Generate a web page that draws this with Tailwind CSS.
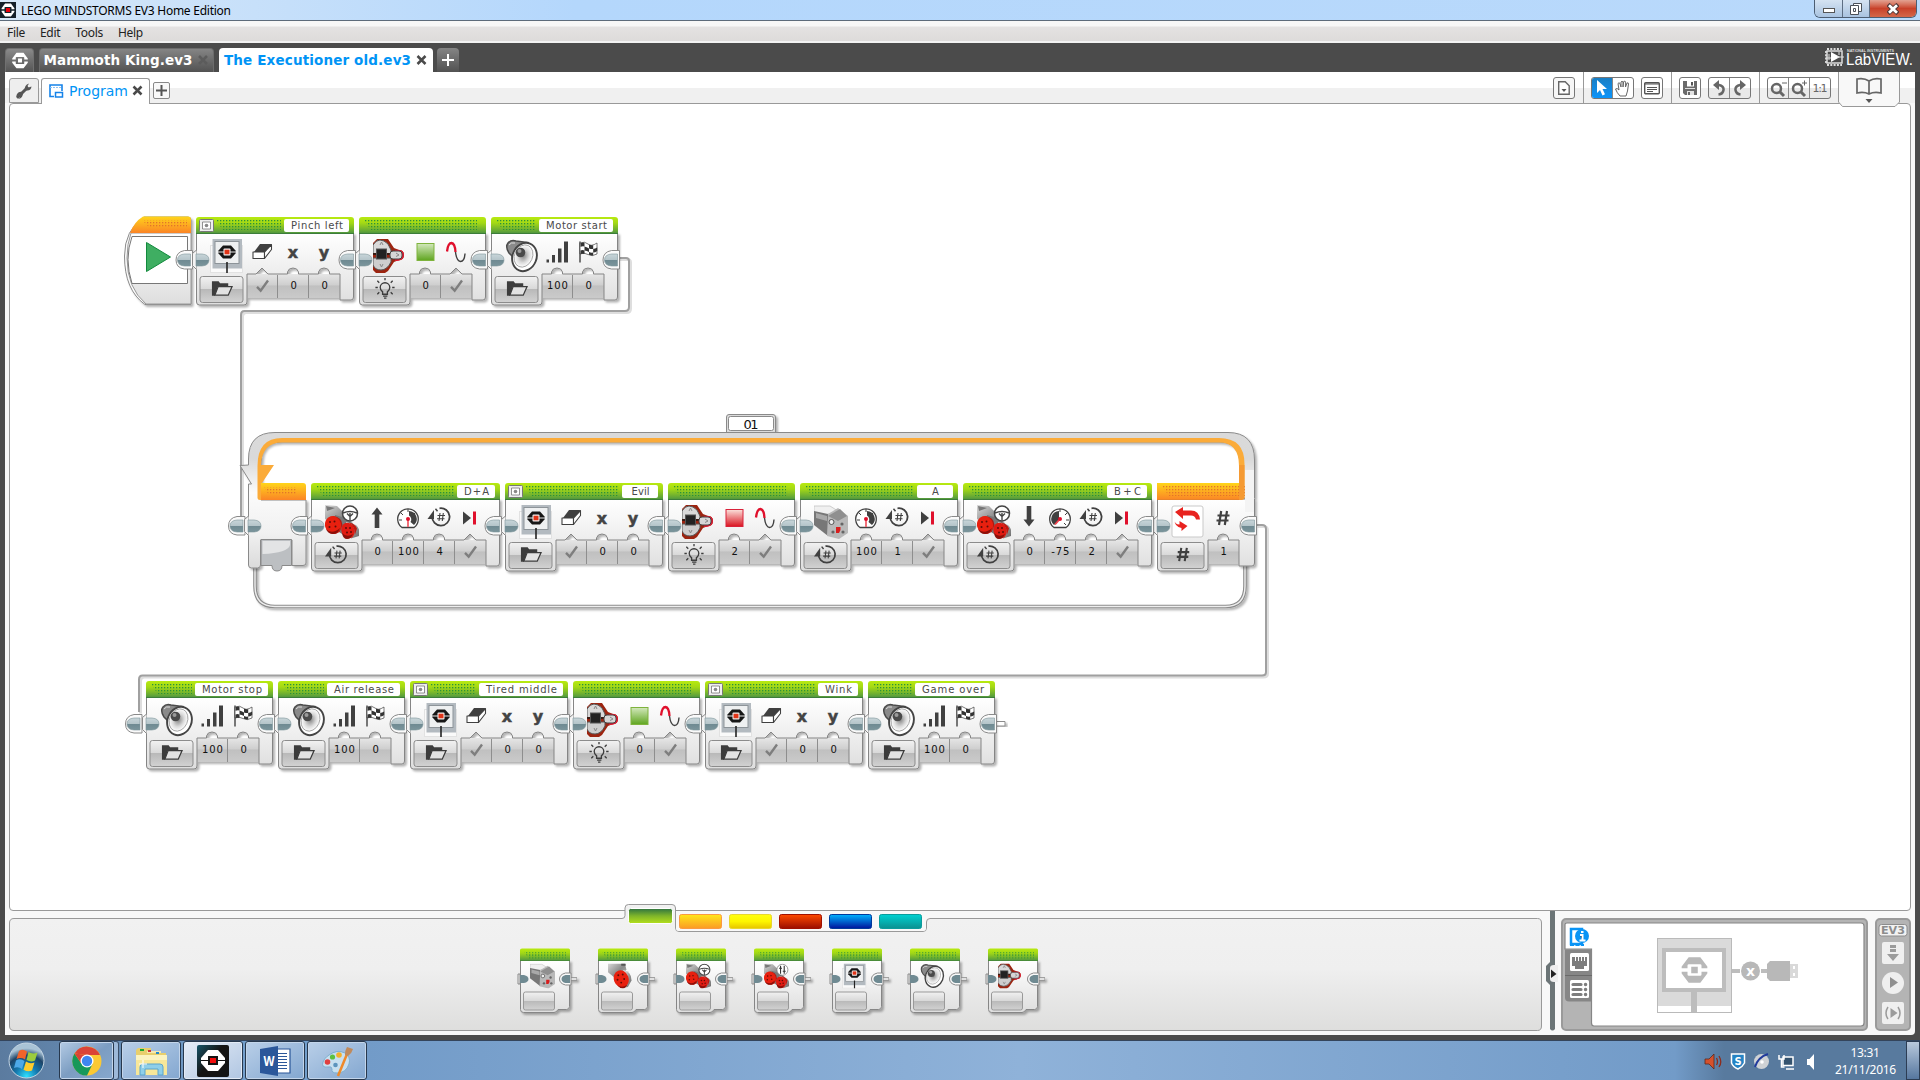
<!DOCTYPE html>
<html lang="en">
<head>
<meta charset="utf-8">
<title>LEGO MINDSTORMS EV3 Home Edition</title>
<script src="https://cdn.jsdelivr.net/npm/@tailwindcss/browser@4"></script>
</head>
<body class="w-[1920px] h-[1080px] overflow-hidden bg-[#4b4b4b] flex flex-col font-['Noto_Sans','Open_Sans',sans-serif]">

<!-- shared definitions -->
<svg class="absolute w-0 h-0" aria-hidden="true">
  <defs>
    <linearGradient id="green" x1="0" y1="0" x2="0" y2="1"><stop offset="0" stop-color="#b8ea10"/><stop offset=".35" stop-color="#a4d915"/><stop offset=".9" stop-color="#5a9f3c"/><stop offset="1" stop-color="#3f8038"/></linearGradient>
    <linearGradient id="orange" x1="0" y1="0" x2="0" y2="1"><stop offset="0" stop-color="#ffd51a"/><stop offset="1" stop-color="#fb8426"/></linearGradient>
    <linearGradient id="body" x1="0" y1="0" x2="0" y2="1"><stop offset="0" stop-color="#fff"/><stop offset=".3" stop-color="#f6f6f6"/><stop offset="1" stop-color="#dedede"/></linearGradient>
    <linearGradient id="param" x1="0" y1="0" x2="0" y2="1"><stop offset="0" stop-color="#e6e6e6"/><stop offset=".45" stop-color="#cfcfcf"/><stop offset=".5" stop-color="#c0c0c0"/><stop offset="1" stop-color="#cacaca"/></linearGradient>
    <linearGradient id="btn" x1="0" y1="0" x2="0" y2="1"><stop offset="0" stop-color="#f2f2f2"/><stop offset=".49" stop-color="#d8d8d8"/><stop offset=".5" stop-color="#b9b9b9"/><stop offset="1" stop-color="#d2d2d2"/></linearGradient>
    <linearGradient id="plug" x1="0" y1="0" x2="0" y2="1"><stop offset="0" stop-color="#c8d5d9"/><stop offset=".5" stop-color="#b4c4c9"/><stop offset=".52" stop-color="#6f8a92"/><stop offset="1" stop-color="#7b959c"/></linearGradient>
    <linearGradient id="sqg" x1="0" y1="0" x2="0" y2="1"><stop offset="0" stop-color="#d3e8bd"/><stop offset="1" stop-color="#5fa51f"/></linearGradient>
    <linearGradient id="sqr" x1="0" y1="0" x2="0" y2="1"><stop offset="0" stop-color="#fbe2dc"/><stop offset="1" stop-color="#da1420"/></linearGradient>
    <linearGradient id="metal" x1="0" y1="0" x2="1" y2="1"><stop offset="0" stop-color="#d8d8d8"/><stop offset=".5" stop-color="#8b8b8b"/><stop offset="1" stop-color="#c4c4c4"/></linearGradient>
    <linearGradient id="rim" x1="0" y1="0" x2="1" y2="1"><stop offset="0" stop-color="#efefef"/><stop offset=".5" stop-color="#9a9a9a"/><stop offset="1" stop-color="#666"/></linearGradient>
    <linearGradient id="frame" gradientUnits="userSpaceOnUse" x1="0" y1="432" x2="0" y2="566"><stop offset="0" stop-color="#dadada"/><stop offset=".2" stop-color="#d9d9d9"/><stop offset=".45" stop-color="#fbfbfb"/><stop offset=".75" stop-color="#f1f1f1"/><stop offset="1" stop-color="#dcdcdc"/></linearGradient>
    <radialGradient id="cone"><stop offset="0" stop-color="#888"/><stop offset=".6" stop-color="#dcdcdc"/><stop offset="1" stop-color="#fff"/></radialGradient>
    <pattern id="dots" width="3" height="3" patternUnits="userSpaceOnUse"><rect width="1.3" height="1.3" fill="#2b9139"/></pattern>
    <pattern id="dotso" width="3" height="3" patternUnits="userSpaceOnUse"><rect width="1.3" height="1.3" fill="#e2742a"/></pattern>
    <filter id="sh" x="-10%" y="-10%" width="125%" height="130%"><feDropShadow dx="2" dy="2" stdDeviation="1" flood-color="#000" flood-opacity=".3"/></filter>

    <symbol id="ev3" viewBox="0 0 24 24"><path fill="currentColor" d="M7 1h10l6 8v1.6h-5V8.2q0-1.2-1.2-1.2H7.200q-1.200 0-1.200 1.200v2.400H1V9zM7 23h10l6-8v-1.600h-5v2.400q0 1.200-1.200 1.200H7.200q-1.200 0-1.200-1.200v-2.400H1V15zM9.200 9.200h5.600v5.600H9.200z"/></symbol>

    <!-- main block artwork, 34 x 34 -->
    <symbol id="m-display" viewBox="0 0 34 34"><rect x=".5" y="6.500" width="32" height="27" fill="#fafafa" stroke="#e2e2e2"/><rect x="2.500" y="0" width="29.500" height="29.500" fill="#b3bac0"/><rect x="5" y="2.500" width="24" height="22" fill="#eef0f1" stroke="#8d9499"/><path d="M13 6.500h8l4.500 5v3l-4.500 5h-8l-4.500-5v-3z" fill="#161616"/><path d="M8.500 13h17" stroke="#fff" stroke-width=".9"/><rect x="13.500" y="9.500" width="7" height="7" rx="1" fill="#f4f4f4"/><rect x="14.500" y="10.700" width="5" height="4.600" fill="#e03418"/><path d="M17 23V34" stroke="#222" stroke-width="1.600"/></symbol>
    <symbol id="m-brick" viewBox="0 0 34 34"><path d="M0 4 4 0h11l6 9 5 2q5 0 5 5t-5 5l-5 2-6 9-3 2H3l-3-3z" fill="#9c2410"/><path d="M22 11q9-1 9 5t-9 6z" fill="#e01830"/><path d="M0 6q3-5 7-5t8 4l3 6v4H0z" fill="#d9d9d9" stroke="#555"/><path d="M0 19h18v4q-4 8-10 8T0 26z" fill="#cecece" stroke="#555"/><path d="M0 15h28" stroke="#3b1b14" stroke-width="2"/><rect x="3.500" y="10" width="10" height="10" fill="#222" stroke="#555"/><rect x="17" y="12" width="12" height="8" rx="3" fill="#d6d6d6" stroke="#444"/><path d="m7 6 1.500-3L10 6M7 25l1.500 3 1.500-3M23 14l3 2-3 1.500" stroke="#888" fill="none"/></symbol>
    <symbol id="m-speaker" viewBox="0 0 34 34"><path d="M4 14Q0 8 3 4q3-3.500 8-2l12 1.500L9 25 7 17z" fill="#8a8a8a" stroke="#4b4b4b" stroke-width="1.500"/><path d="M4 6q2-3 6-2" stroke="#ddd" fill="none"/><ellipse cx="19.500" cy="18" rx="12" ry="14.500" transform="rotate(22 19.500 18)" fill="#fff" stroke="#444" stroke-width="1.900"/><ellipse cx="18.500" cy="17" rx="9" ry="11.500" transform="rotate(24 18.500 17)" fill="url(#cone)" stroke="#999" stroke-width=".8"/><circle cx="15.500" cy="13.500" r="4.800" fill="#4a4a4a"/><circle cx="14.500" cy="12" r="2" fill="#9a9a9a"/></symbol>
    <symbol id="m-wheels" viewBox="0 0 34 34"><path d="M0 0 12 1l8 8 12 14-14 2L0 14z" fill="url(#metal)"/><path d="M1 1l9 2-8 3z" fill="#444" opacity=".6"/><path d="m10 10 10 3 8 6-8 12-9-6z" fill="#777"/><path d="M21 17 31 20q5 5 3 11l-8 2.500z" fill="url(#rim)"/><ellipse cx="23" cy="25.500" rx="6.500" ry="8" transform="rotate(-20 23 25.500)" fill="#e01b12"/><path d="M24 17.500q6 1 8 6l-2 6q0-8-6-12" fill="#c01810"/><path d="M8 11q9 1 9.500 9l-3 7-4 2z" fill="#b01a12"/><ellipse cx="8" cy="20" rx="8" ry="9" transform="rotate(-15 8 20)" fill="#e8200f"/><path d="M1 24q6 6 14-1-2 6-7 6t-7-5zM17 28q5 5 11 1-2 5-6 5t-5-6z" fill="#8c100a"/><g fill="#5c0d08"><circle cx="5" cy="17" r="1"/><circle cx="9.500" cy="16.500" r="1"/><circle cx="4.500" cy="22" r="1"/><circle cx="10.500" cy="21.500" r="1"/><circle cx="21" cy="23" r="1"/><circle cx="25" cy="23" r="1"/><circle cx="22" cy="27.500" r="1"/><circle cx="26" cy="27" r="1"/></g></symbol>
    <symbol id="m-steer" viewBox="0 0 34 34"><use href="#m-wheels" width="34" height="34"/><circle cx="25" cy="8.500" r="7.500" fill="#fff" stroke="#444" stroke-width="1.500"/><path d="M18 8q7-3 14 0M25 8v7.500M22 8.500l3 3 3-3" stroke="#444" stroke-width="1.400" fill="none"/></symbol>
    <symbol id="m-tank" viewBox="0 0 34 34"><use href="#m-wheels" width="34" height="34"/><circle cx="25" cy="8.500" r="7.500" fill="#fff" stroke="#777"/><path d="M22.500 3v11M27.500 3v11M20.500 6.500h4M25.500 10.500h4" stroke="#333" stroke-width="1.500"/></symbol>
    <symbol id="m-large" viewBox="0 0 34 34"><path d="M0 0h23l2 8-10 16L0 12z" fill="url(#metal)"/><path d="M18 0h6v3h-6z" fill="#555"/><path d="M21 9q11 2 11 14l-5 9-6 1z" fill="url(#rim)"/><ellipse cx="18" cy="21" rx="10" ry="12" transform="rotate(-20 18 21)" fill="#e8200f"/><path d="M12 29q7 5 14 0-2 5-6 5t-8-5" fill="#8c100a"/><g fill="#5c0d08"><circle cx="14" cy="16" r="1.300"/><circle cx="20" cy="15" r="1.300"/><circle cx="13" cy="22" r="1.300"/><circle cx="22" cy="21" r="1.300"/><circle cx="18" cy="26" r="1.300"/></g></symbol>
    <symbol id="m-medium" viewBox="0 0 34 34"><path d="M0 1h16l8 5-16 5-8-4z" fill="#f0f0f0" stroke="#bbb" stroke-width=".7"/><path d="M0 6 14 9v22L0 20z" fill="#777"/><path d="M14 9 24 3l10 8v17l-9 6-12-3z" fill="#b9b9b9"/><path d="M14 11l12-7 7 7-9 5z" fill="#8f8f8f"/><path d="M2 8l11 3v5L2 13z" fill="#a9a9a9"/><circle cx="17.500" cy="17" r="2.500" fill="#eee" stroke="#555"/><g fill="#666"><circle cx="28" cy="19" r="1.600"/><circle cx="19" cy="27" r="1.600"/><circle cx="29" cy="27" r="1.600"/></g><path d="M22 22h4.500v3l-1.500 3h-3z" fill="#d81e1e"/></symbol>
    <symbol id="m-loop" viewBox="0 0 34 34"><rect x="1" y="1" width="31" height="31" rx="2" fill="#fff" stroke="#c9c9c9"/><path d="M4 7 12 2v3.500h8q8 0 9 9h-4q-1-4-5-4h-8V14z" fill="#e8231f"/><path d="M3.500 14.500q0 5 5 5V16l8 5-6 5v-3Q3.500 22 3.500 14.500" fill="#e8231f"/></symbol>

    <!-- parameter glyphs, centred on 12,12 of a 24 x 24 box -->
    <symbol id="p-eraser" viewBox="0 0 24 24"><path d="M10 4h11.500l-6 8H4z" fill="#404040"/><path d="M3 12h11.500v6.500H3z" fill="#fff" stroke="#404040" stroke-width="1.100" stroke-linejoin="round"/><path d="M14.500 18.500l7-9V4.500l-7 7.500z" fill="#fff" stroke="#404040" stroke-width="1.100" stroke-linejoin="round"/></symbol>
    <symbol id="p-sqg" viewBox="0 0 24 24"><rect x="3.500" y="3.500" width="17" height="17" fill="url(#sqg)" stroke="#7eb33c"/></symbol>
    <symbol id="p-sqr" viewBox="0 0 24 24"><rect x="3.500" y="3.500" width="17" height="17" fill="url(#sqr)" stroke="#d9223a"/></symbol>
    <symbol id="p-wave" viewBox="0 0 24 24"><path d="M11.500 12q1 9 5 9.500 4 0 4.500-8" fill="none" stroke="#404040" stroke-width="1.400"/><path d="M3 11.500q1-8.500 4.500-8.500 3.500.5 4 9" fill="none" stroke="#e0102c" stroke-width="2.300"/></symbol>
    <symbol id="p-bars" viewBox="0 0 24 24"><path d="M1.500 19.500h2.500v3H1.500zM7 15h3v7.500H7zM13 8.500h3.500v14H13zM19 1.500h4v21h-4z" fill="#404040"/></symbol>
    <symbol id="p-flag" viewBox="0 0 24 24"><path d="M4 1.500v21" stroke="#404040" stroke-width="1.400"/><path d="M4 3q5-2 8 1t9-1v11q-5 3-9 0.500T4 14z" fill="#fff" stroke="#404040" stroke-width=".7"/><path d="M4.500 3q2-1 4-.3V6.500q-2-.5-4 .3zM13 4.500q2 1 4.200.7V9q-2 .2-4.200-.5zM8.500 6.500q2 .5 4.500 2V12q-2-1.500-4.500-1.500zM17.200 9q2-.3 4-1.500V11q-2 1.500-4 1.500zM4.500 10.500q2-1 4 0V14q-2-.5-4 0zM13 12q2 1 4.200.5V15.500q-2 .3-4.200-.7z" fill="#333"/></symbol>
    <symbol id="p-up" viewBox="0 0 24 24"><path d="M12 1.500 17.500 8.500h-3.200v13.500H9.700V8.500H6.500z" fill="#404040"/></symbol>
    <symbol id="p-down" viewBox="0 0 24 24"><path d="M12 20.500 6.500 13.500h3.200V0h4.600v13.500h3.200z" fill="#404040"/></symbol>
    <symbol id="p-gauge" viewBox="0 0 24 24"><path d="M6 21.500a10.300 10.300 0 1 1 12 0z" fill="#fff" stroke="#404040" stroke-width="1.300"/><path d="M13 5a8 8 0 0 1 5 14l-3.500-3a4.500 4.500 0 0 0-1.500-6.500z" fill="#404040"/><path d="M12 3v3M5 7l2 2M3 14h3M19 7l-2 2" stroke="#404040"/><path d="M12 13v8" stroke="#f0616c" stroke-width="1.800"/><circle cx="12" cy="13" r="2" fill="#e0102c"/></symbol>
    <symbol id="p-gaugel" viewBox="0 0 24 24"><path d="M6 21.500a10.300 10.300 0 1 1 12 0z" fill="#fff" stroke="#404040" stroke-width="1.300"/><path d="M11 5a8 8 0 0 0-5 14l5-5z" fill="#404040"/><path d="M12 3v3M19 7l-2 2M21 14h-3M18 19l-2-2" stroke="#404040"/><path d="m12 13-5 5.500" stroke="#f0414c" stroke-width="1.800"/><circle cx="12" cy="13" r="2" fill="#e0102c"/></symbol>
    <symbol id="p-rot" viewBox="0 0 24 24"><path d="M12.500 3.300a8.700 8.700 0 1 1-7.300 8" fill="none" stroke="#404040" stroke-width="1.800"/><path d="M7 5v9H.5z" fill="#404040"/><path d="M8.500 3.800l2 2.500" stroke="#404040" stroke-width="1.500" fill="none"/><path d="M13 8 12 16M16.300 8l-1 8M10.500 10.500h7.500M10 13.700h7.500" stroke="#404040" stroke-width="1.100"/></symbol>
    <symbol id="p-skip" viewBox="0 0 24 24"><path d="M5 5.500 13 12l-8 6.500z" fill="#404040"/><path d="M15 5.500h3v13h-3z" fill="#e0102c"/></symbol>
    <symbol id="p-hash" viewBox="0 0 24 24"><path d="M10.200 5 8 19M16 5l-2.200 14M6.500 9.500h12M5.500 14.500h12" stroke="#404040" stroke-width="2.200"/></symbol>
    <symbol id="p-check" viewBox="0 0 24 24"><path d="M6 13l4 4 8-11" fill="none" stroke="#7e7e7e" stroke-width="2.600"/></symbol>
    <symbol id="p-folder" viewBox="0 0 24 24"><path d="M1.500 19.500V4.500h7l1.500 2h8.500v3H8L4.500 19.500z" fill="#3c3c3c"/><path d="M8 10H22.500L18.500 19H4.500z" fill="#e2e2e2" stroke="#3c3c3c" stroke-width="1.300"/></symbol>
    <symbol id="p-bulb" viewBox="0 0 24 24"><path d="M9.500 18v-2.500Q7 13.500 7 11a5 5 0 0 1 10 0q0 2.500-2.500 4.500V18zM10 20h4.500M11 22h2.500M12 3.500V1M6 6 4 4M18 6l2-2M4.500 11H2M19.500 11H22M6 16l-2 2M18 16l2 2" fill="none" stroke="#3c3c3c" stroke-width="1.400"/></symbol>
  </defs>
</svg>

<!-- title bar -->
<header class="h-[21px] shrink-0 flex items-center border-b border-[#5d6b7a] bg-linear-to-r from-[#d6e7f8] via-[#b4d7fc] via-30% to-[#b9d9fb]">
  <div class="w-4 h-4 bg-[#152029] flex items-center justify-center relative"><svg class="w-[14px] h-[14px] text-white"><use href="#ev3"/></svg><i class="absolute w-1 h-1 bg-red-600"></i></div>
  <svg class="ml-[5px] w-[214px] h-[20px]"><text x="0" y="15" font-size="12" textLength="210" class="fill-black font-['Noto_Sans']">LEGO MINDSTORMS EV3 Home Edition</text></svg>
  <div class="ml-auto mr-[3px] self-start flex h-[18px] border border-t-0 border-[#4c5d72] rounded-b-md overflow-hidden">
    <div class="w-7 bg-linear-to-b from-[#d5e3f2] to-[#a9c3e0] flex items-center justify-center border-r border-[#5d6e83]"><i class="w-3 h-[5px] mt-1 bg-white border border-[#555]"></i></div>
    <div class="w-[27px] bg-linear-to-b from-[#d5e3f2] to-[#a9c3e0] flex items-center justify-center border-r border-[#5d6e83]"><svg class="w-3 h-3" viewBox="0 0 12 12" fill="#fff" stroke="#4a5058"><path d="M3.500.5h8v8h-8z"/><path d="M.5 2.500h8v9h-8zM3.500 5.500h2v3h-2z"/></svg></div>
    <div class="w-[46px] bg-linear-to-b from-[#e2a292] via-[#c8412a] to-[#d4674a] flex items-center justify-center"><svg class="w-3 h-3" viewBox="0 0 12 12"><path d="M1 1.500 11 10.500M11 1.500 1 10.500" stroke="#53393a" stroke-width="4.500"/><path d="M2 2.300 10 9.700M10 2.300 2 9.700" stroke="#fff" stroke-width="2.800"/></svg></div>
  </div>
</header>
<!-- menu -->
<nav class="h-[22px] shrink-0 bg-linear-to-b from-[#f7f7f7] from-25% via-[#e4e2e2] via-30% to-[#dddbda] border-b-2 border-[#f2f2f2] text-[12px] leading-[24px] tracking-[-0.3px] text-[#222] flex pl-[7px] gap-[15px]">
  <span>File</span><span>Edit</span><span>Tools</span><span>Help</span>
</nav>
<!-- project tabs -->
<div class="h-[29px] shrink-0 flex items-end pl-[5px] font-['DejaVu_Sans',sans-serif]">
  <div class="w-[29px] h-[24px] rounded-t-[4px] bg-linear-to-b from-[#8a8a8a] to-[#555] border border-b-0 border-[#707070] flex items-center justify-center"><svg class="w-[18px] h-[17px] text-white"><use href="#ev3"/></svg></div>
  <div class="ml-[5px] w-[175px] h-[24px] rounded-t-[4px] bg-linear-to-b from-[#858585] to-[#525252] border border-b-0 border-[#6c6c6c]"><svg class="w-[173px] h-[24px]"><text x="3.500" y="16" font-size="13.500" font-weight="bold" textLength="149" fill="#fff" font-family="DejaVu Sans">Mammoth King.ev3</text><path d="m159 7 8 8m0-8-8 8" stroke="#5c5c5c" stroke-width="2.500"/></svg></div>
  <div class="ml-[5px] w-[214px] h-[24px] rounded-t-[4px] bg-white"><svg class="w-[214px] h-[24px]"><text x="5" y="17" font-size="13.500" font-weight="bold" textLength="187" fill="#0094f5" font-family="DejaVu Sans">The Executioner old.ev3</text><path d="m198.500 8 8 8m0-8-8 8" stroke="#4a4a4a" stroke-width="2.500"/></svg></div>
  <div class="ml-[4px] w-[22px] h-[24px] rounded-t-[4px] bg-linear-to-b from-[#858585] to-[#525252] flex items-center justify-center"><svg class="w-3 h-3"><path d="M6 0v12M0 6h12" stroke="#fff" stroke-width="2"/></svg></div>
  <div class="ml-auto self-start mt-[5px] mr-[4px] flex gap-[2px]">
    <svg class="w-[19px] h-[18px]" viewBox="0 0 19 18"><rect x="2" y="3" width="15" height="12" fill="none" stroke="#ddd" stroke-width="1.500"/><path d="M2 1h15M2 17h15M1 3v12" stroke="#ddd" stroke-width="1.800" stroke-dasharray="2 1.300"/><path d="M6 4v10l9-5z" fill="#fff"/><path d="M1 10h5M12 9h7M4 6v6M14 4v3" stroke="#ddd"/></svg>
    <svg class="w-[70px] h-[24px]"><text x="1" y="3.500" font-size="3.500" textLength="47" lengthAdjust="spacingAndGlyphs" font-weight="bold" fill="#ddd" font-family="Liberation Sans">NATIONAL INSTRUMENTS</text><text x="0" y="17" font-size="17" textLength="67" lengthAdjust="spacingAndGlyphs" fill="#fff" font-family="Liberation Sans">LabVIEW.</text></svg>
  </div>
</div>

<!-- application body -->
<main class="ml-[5px] w-[1910px] h-[963px] shrink-0 bg-[#f8f8f8] rounded-br flex flex-col">
  <!-- program tabs + toolbar -->
  <div class="h-[31px] shrink-0 bg-linear-to-b from-white from-50% to-[#f0f0f0] to-52% flex pl-[4px] relative z-10">
    <div class="mt-[6px] w-[30px] h-[25px] rounded-t-[3px] border border-[#999] bg-[#eee] flex items-center justify-center"><svg class="w-4 h-4" viewBox="0 0 16 16"><path d="M2 14 11 5" stroke="#555" stroke-width="3" stroke-linecap="round"/><path d="M9 7q-1-5 4-6.500L11.500 3l1 1.500 3-1Q15 8 10.500 7.500M6.500 9Q3 8 1 11l-1 3 2.500-1.500L4 14l-1.500 2Q7 15 7 10z" fill="#555"/></svg></div>
    <div class="ml-[2px] mt-[6px] w-[109px] h-[26px] rounded-t-[3px] border border-b-0 border-[#999] bg-white"><svg class="w-[106px] h-[25px]"><path d="M20 12V6H8v11.500h4" fill="none" stroke="#1583e9" stroke-width="1.600"/><path d="M8 8.500h12" stroke="#8cc2f4" stroke-dasharray="2 1"/><path d="M13.500 13.500h7v4.500h-7z" fill="#fff" stroke="#1583e9" stroke-width="1.500"/><text x="27" y="16.500" font-size="14" textLength="59" fill="#0094f5" font-family="DejaVu Sans">Program</text><path d="m91.500 7.500 8 8m0-8-8 8" stroke="#4a4a4a" stroke-width="2.500"/></svg></div>
    <div class="ml-[3px] mt-[10px] w-[17px] h-[17px] rounded-[2px] border border-[#888] bg-[#f8f8f8] flex items-center justify-center"><svg class="w-[11px] h-[11px]"><path d="M5.500 0v11M0 5.500h11" stroke="#555" stroke-width="2"/></svg></div>

    <div class="ml-auto flex">
      <div class="pt-[5px] pr-[8px] border-r border-[#999]"><div class="w-[22px] h-[22px] rounded-[3px] border border-[#777] flex items-center justify-center bg-[#f6f6f6]"><svg class="w-3 h-[14px]"><path d="M.7.7h6.500l4 4v8.600H.7z" fill="#fff" stroke="#666" stroke-width="1.400"/><path d="M3.500 8h5L6 11z" fill="#555"/></svg></div></div>
      <div class="pt-[5px] pl-[7px] pr-[8px] border-r border-[#999] flex gap-[7px]">
        <div class="w-[43px] h-[22px] rounded-[3px] border border-[#777] flex overflow-hidden bg-white">
          <div class="w-[21px] bg-linear-to-b from-[#1a7fc4] to-[#0a94fa] flex items-center justify-center"><svg class="w-3 h-4"><path d="M1 0v13l3-3 2.500 5.500 2.500-1.200L6.500 9H11z" fill="#fff"/></svg></div>
          <div class="w-[21px] border-l border-[#888] flex items-center justify-center"><svg class="w-4 h-[17px]" viewBox="0 0 16 17"><path d="M5 16q-3-3-4.500-7Q2 7.500 4 10L3 3.500q1-1.500 2 0L6 7V2q1-1.500 2 0v5l.7-5.500q1.300-1 2 .5L10.500 7 12 3q1.500-.7 1.500 1L12.500 11 11 16z" fill="#fff" stroke="#666"/></svg></div>
        </div>
        <div class="w-[22px] h-[22px] rounded-[3px] border border-[#777] bg-white flex items-center justify-center"><svg class="w-4 h-[14px]"><rect x=".7" y="1.700" width="14.600" height="11" rx="1" fill="#fff" stroke="#555" stroke-width="1.400"/><path d="M1 3h14M3 6.500h10M3 8.500h10M3 10.500h6" stroke="#555" stroke-width="1"/></svg></div>
      </div>
      <div class="pt-[5px] pl-[7px] pr-[8px] border-r border-[#999] flex gap-[7px]">
        <div class="w-[22px] h-[22px] rounded-[3px] border border-[#777] bg-white flex items-center justify-center"><svg class="w-[14px] h-[14px]"><path d="M0 0h14v14H2l-2-2z" fill="#6a6a6a"/><path d="M4 0h7v5.500H4z" fill="#fff"/><path d="M8 1h2v3.500H8z" fill="#555"/><path d="M2 7.500h10" stroke="#ddd"/><path d="M4 10h7v4H4z" fill="#e4e4e4"/><path d="M5 11h2v3H5z" fill="#666"/></svg></div>
        <div class="w-[43px] h-[22px] rounded-[3px] border border-[#777] bg-linear-to-b from-white from-50% to-[#e9e9e9] to-52% flex">
          <div class="w-[21px] flex items-center justify-center"><svg class="w-3 h-4"><path d="M3 5h3q5 1 4.500 5Q10 14 5.500 14.500" fill="none" stroke="#666" stroke-width="2.500"/><path d="M6 0v10L0 5z" fill="#666"/></svg></div>
          <div class="w-[21px] border-l border-[#888] flex items-center justify-center"><svg class="w-3 h-4"><path d="M9 5H6Q1 6 1.500 10 2 14 6.500 14.500" fill="none" stroke="#666" stroke-width="2.500"/><path d="M6 0v10l6-5z" fill="#666"/></svg></div>
        </div>
      </div>
      <div class="pt-[5px] pl-[7px] pr-[7px] flex">
        <div class="w-[64px] h-[22px] rounded-[3px] border border-[#777] bg-linear-to-b from-white from-50% to-[#e9e9e9] to-52% flex">
          <svg class="w-[21px] h-5 border-r border-[#888]"><circle cx="8.500" cy="10.500" r="4.500" fill="none" stroke="#666" stroke-width="2.500"/><path d="m12 14 4 4" stroke="#666" stroke-width="3"/><path d="M14 5h5" stroke="#666"/></svg>
          <svg class="w-[21px] h-5 border-r border-[#888]"><circle cx="8.500" cy="10.500" r="4.500" fill="none" stroke="#666" stroke-width="2.500"/><path d="m12 14 4 4" stroke="#666" stroke-width="3"/><path d="M13 5h5M15.500 2.500v5" stroke="#666"/></svg>
          <svg class="w-5 h-5"><text x="2.500" y="14" font-size="11" textLength="15" fill="#666" font-family="DejaVu Sans">1:1</text></svg>
        </div>
      </div>
      <div class="w-[62px] h-[34px]"><svg class="w-[62px] h-[35px]"><path d="M.5 0V30l4 4.500H57l4.500-4.500V0" fill="#f8f8f8" stroke="#999"/><path d="M31 9q-5-3.500-12-2v14q7-1.500 12 1 5-2.500 12-1V7q-7-1.500-12 2v13" fill="none" stroke="#666" stroke-width="1.700"/><path d="M27.500 27h7L31 31z" fill="#555"/></svg></div>
      <div class="w-[15px]"></div>
    </div>
  </div>

  <!-- programming canvas -->
  <div class="ml-[4px] w-[1902px] h-[808px] shrink-0 bg-white border border-[#999] rounded-[4px] overflow-hidden">
    <svg id="canvas" class="block w-[1900px] h-[806px]" viewBox="10 104 1900 806"></svg>
  </div>

  <!-- bottom area -->
  <div class="relative flex grow">
    <svg class="absolute left-0 top-[-8px] w-[1545px] h-[132px]" viewBox="5 903 1545 132">
      <defs><linearGradient id="pal" gradientUnits="userSpaceOnUse" x1="0" y1="918" x2="0" y2="1030"><stop offset="0" stop-color="#f1f1f1"/><stop offset=".45" stop-color="#efefef"/><stop offset="1" stop-color="#dededd"/></linearGradient>
      <linearGradient id="t0" x1="0" y1="0" x2="0" y2="1"><stop stop-color="#2f7340"/><stop offset=".5" stop-color="#7fb52a"/><stop offset="1" stop-color="#b5e01c"/></linearGradient>
      <linearGradient id="t1" x1="0" y1="0" x2="0" y2="1"><stop stop-color="#ffe81a"/><stop offset="1" stop-color="#fb9a26"/></linearGradient>
      <linearGradient id="t2" x1="0" y1="0" x2="0" y2="1"><stop stop-color="#ffff10"/><stop offset=".5" stop-color="#fdf500"/><stop offset="1" stop-color="#e6c400"/></linearGradient>
      <linearGradient id="t3" x1="0" y1="0" x2="0" y2="1"><stop stop-color="#ff4a00"/><stop offset="1" stop-color="#9a0d00"/></linearGradient>
      <linearGradient id="t4" x1="0" y1="0" x2="0" y2="1"><stop stop-color="#00b4ff"/><stop offset="1" stop-color="#00129b"/></linearGradient>
      <linearGradient id="t5" x1="0" y1="0" x2="0" y2="1"><stop stop-color="#00d2d2"/><stop offset="1" stop-color="#0b9090"/></linearGradient></defs>
      <path d="M9.500 923q0-4.500 4.500-4.500H622q3 0 3-3V908q0-3.500 3.500-3.500H672q3.500 0 3.500 3.500V928q0 3.500 3.500 3.500H923q3.500 0 3.500-3.500V922q0-3.500 3.500-3.500H1537.500q4 0 4 4.500V1026q0 4.500-4 4.500H14q-4.500 0-4.500-4.500z" fill="url(#pal)" stroke="#999"/>
      <path d="M676 911H926V928q0 3-3 3H679q-3 0-3-3z" fill="#f8f8f8"/>
      <g id="palette"></g>
    </svg>
    <svg class="absolute left-[1540px] top-0 w-[14px] h-[121px]" viewBox="0 0 14 121"><path d="M5 0h5v118q-2.500 3-5 0V74l-4-4V55l4-4z" fill="#6c7577"/><path d="M5 57q0-3 4-3h4v17H9q-4 0-4-3z" fill="#eee"/><path d="M6 58.500v8.500l5.500-4z" fill="#222"/></svg>
    <!-- brick status -->
    <div class="absolute left-[1556px] top-[7px] w-[307px] h-[113px] rounded-[5px] border-2 border-[#9a9a9a] bg-[#b4b4b4]">
      <svg class="absolute left-[1px] top-[2px] w-[302px] h-[106px]" viewBox="1564 922 302 106">
        <path d="M1565 924.500q0-1.500 2-1.500H1861q3 0 3 3V1023q0 3-3 3H1594q-2.500 0-2.500-3V949H1565z" fill="#fff" stroke="#868686" stroke-width="1.200"/>
        <path d="M1565 949.500h27v52h-23q-4 0-4-4z" fill="#868686"/><path d="M1565 975.500h27" stroke="#6a6a6a"/>
        <rect x="1571" y="929" width="11" height="15" fill="none" stroke="#0a94f5" stroke-width="2.500"/><circle cx="1582" cy="936" r="7" fill="#0a94f5"/><path d="M1580 935h2.500v5M1579.500 940.500h6M1581 932h2.500" stroke="#fff" stroke-width="2"/><path d="M1570 945h14" stroke="#0a94f5" stroke-width="2" stroke-dasharray="4 1.500"/>
        <rect x="1570" y="953" width="19" height="18" rx="1.500" fill="#fff"/><path d="M1572 957h3v4h1v-4h2v4h1v-4h2v4h1v-4h2v4h1v-4h2v9h-3v3h-9v-3h-3z" fill="#7d7d7d"/>
        <rect x="1570" y="980" width="19" height="18" rx="1.500" fill="#fff"/><path d="M1573 984.500h8M1573 989.500h8M1573 994.500h8" stroke="#7d7d7d" stroke-width="3.200" stroke-linecap="round"/><path d="M1585.500 984.500h.1M1585.500 989.500h.1M1585.500 994.500h.1" stroke="#7d7d7d" stroke-width="3.400" stroke-linecap="round"/>
        <rect x="1657.500" y="938.500" width="74" height="74" fill="#dadada" stroke="#bababa"/><path d="M1658 1006h73v6h-73z" fill="#fff"/><rect x="1664" y="950" width="60" height="40" fill="#fff" stroke="#bdbdbd" stroke-width="4"/><path d="M1691 992h6v20h-6z" fill="#bdbdbd"/>
        <svg x="1680" y="956" width="29" height="28" class="text-[#b8b8b8]"><use href="#ev3" width="29" height="28"/></svg>
        <path d="M1732 971h8M1761 971h7" stroke="#bdbdbd" stroke-width="4"/><circle cx="1750.500" cy="971" r="9.500" fill="#b8b8b8"/><text x="1750.500" y="975.500" text-anchor="middle" font-size="14" font-weight="bold" fill="#fff" font-family="DejaVu Sans">x</text>
        <path d="M1770 961h20v20h-20l-3-3v-14z" fill="#b8b8b8"/><path d="M1790 964h8v14h-8z" fill="#d9d9d9"/><path d="M1793 966h2v3h-2zM1793 973h2v3h-2z" fill="#fff"/>
      </svg>
    </div>
    <div class="absolute left-[1870px] top-[7px] w-[36px] h-[113px] rounded-[5px] border-2 border-[#9a9a9a] bg-[#b4b4b4]">
      <svg class="w-[32px] h-[109px]" viewBox="1877 920 32 109">
        <rect x="1879" y="924.500" width="28" height="11.500" rx="2.500" fill="#f2f2f2" stroke="#8c8c8c"/><text x="1881" y="934" font-size="10.500" font-weight="bold" textLength="24" lengthAdjust="spacingAndGlyphs" fill="#8c8c8c" font-family="DejaVu Sans">EV3</text>
        <rect x="1882" y="942" width="22" height="22" rx="2" fill="#efefef"/><path d="M1890 945h6v3h-6zM1890 949h6v3h-6zM1887 954h12l-6 7z" fill="#9b9b9b"/>
        <circle cx="1893" cy="983" r="11" fill="#efefef"/><path d="M1890 977v11l8-5.500z" fill="#8f8f8f"/>
        <rect x="1882" y="1002" width="22" height="22" rx="2" fill="#efefef"/><path d="M1890.500 1008v10l7-5z" fill="#9b9b9b"/><path d="M1888 1007q-4 6 0 12M1898 1007q4 6 0 12" fill="none" stroke="#9b9b9b" stroke-width="1.500"/>
      </svg>
    </div>
  </div>
</main>

<!-- taskbar -->
<footer class="mt-[5px] h-[40px] shrink-0 flex items-stretch border-t border-[#34455c] bg-linear-to-r from-[#5b7b9f] via-[#739fcc] via-12% to-[#739fcc] relative">
  <div class="absolute left-[366px] top-0 w-[1310px] h-full bg-linear-to-r from-[#729bc8] via-[#8fb2d9] to-[#729bc8]"></div>
  <div class="absolute inset-y-0 right-0 w-[245px] bg-linear-to-r from-[#729bc8] to-[#587a9e] to-20%"></div>
  <div class="w-[59px] flex items-center pl-[8px] relative"><svg class="w-[37px] h-[37px]" viewBox="0 0 37 37"><defs><radialGradient id="orb" cx=".5" cy=".95" r=".8"><stop stop-color="#2ee0ff"/><stop offset=".4" stop-color="#1478ae"/><stop offset=".75" stop-color="#1d4468"/><stop offset="1" stop-color="#a9c3d6"/></radialGradient></defs><circle cx="18.500" cy="18.500" r="17.500" fill="url(#orb)" stroke="#c3d4e2"/><path d="M11 9q4-2.500 8 .5l-2 8q-4-2.500-8.500-.5z" fill="#f0642a"/><path d="M20.500 10q4 2.500 9 .5l-2.500 8q-4 2-8.500-.5z" fill="#9ccc3e"/><path d="M8 18.500q4-2.500 8.500.5l-2.500 8q-4-3-8-1z" fill="#4da9e8"/><path d="M18 19.500q4 3 8.500 1l-2.500 8q-4 2-8.500-.8z" fill="#ffcd2c"/></svg></div>
  <div class="w-[60px] flex relative">
    <div class="w-[55px] border border-[#27384d] rounded-[3px] bg-linear-to-br from-[#b4cbe4] via-[#7c9dc2] to-[#86a8ce] flex items-center justify-center shadow-[inset_0_0_0_1px_#c3d5ea]"><svg class="w-[30px] h-[30px]" viewBox="0 0 30 30"><circle cx="15" cy="15" r="14.500" fill="#fbc934"/><path d="M2.500 7.500A14.500 14.500 0 0 1 28 9H15z" fill="#da4437"/><path d="M2.500 7.500A14.500 14.500 0 0 0 15 29.500L20.500 18 15 20 9 17z" fill="#17985a"/><path d="M2.500 7.500 9 17l6-8z" fill="#da4437"/><circle cx="15" cy="15" r="6.500" fill="#fff"/><circle cx="15" cy="15" r="5.200" fill="#3f86f0"/></svg></div>
    <div class="w-[5px] border border-l-0 border-[#3c506a] rounded-r-[3px] bg-[#9db9d9]"></div>
  </div>
  <div class="ml-[2px] w-[60px] border border-[#27384d] rounded-[3px] bg-linear-to-br from-[#b9cfe8] to-[#83a7d0] flex items-center justify-center shadow-[inset_0_0_0_1px_#c3d5ea] relative"><svg class="w-[33px] h-[30px]" viewBox="0 0 33 30"><path d="M1 7V4l2-2h13v5h15v20H1z" fill="#e8cf6d"/><path d="M5 3h4v2H5z" fill="#1faa2b"/><path d="M12 5h14v2H12z" fill="#f5e9ae"/><path d="M13 4h3v2h-3z" fill="#c33"/><path d="M21 6h3v2h-3z" fill="#28c"/><path d="M1 9h31v20H1z" fill="#f7e799"/><path d="M1 9h31v5H1z" fill="#fbf3c0"/><path d="M5 29V21q0-3 3-3h17q3 0 3 3v8h-5v-6H10v6z" fill="#8fcfe9" stroke="#5ba4cc"/><path d="M8 14v8M4 18h8" stroke="#fff"/></svg></div>
  <div class="ml-[2px] w-[60px] border border-[#27384d] rounded-[3px] bg-linear-to-br from-[#e5ecf6] to-[#b0c6e2] flex items-center justify-center shadow-[inset_0_0_0_1px_#e3ebf6] relative"><svg class="w-[32px] h-[32px]" viewBox="0 0 32 32"><defs><linearGradient id="ap" x1="0" y1="0" x2=".5" y2=".4"><stop stop-color="#155468"/><stop offset="1" stop-color="#141414"/></linearGradient></defs><rect width="32" height="32" rx="2" fill="url(#ap)"/><path d="M11 5h10l7 8v5l-7 8H11l-7-8v-5z" fill="#fff"/><path d="M4 15.500h24" stroke="#141414"/><path d="M11 11h10v9H11z" fill="#141414"/><path d="M13 13h6v5h-6z" fill="#f20d0d"/></svg></div>
  <div class="ml-[2px] w-[60px] border border-[#27384d] rounded-[3px] bg-linear-to-br from-[#b9cfe8] to-[#83a7d0] flex items-center justify-center shadow-[inset_0_0_0_1px_#c3d5ea] relative"><svg class="w-[31px] h-[32px]" viewBox="0 0 31 32"><path d="M16 4h14v24H16z" fill="#fff" stroke="#2b579a" stroke-width="1.200"/><path d="M18 8.500h9M18 11.500h9M18 14.500h9M18 17.500h9M18 20.500h9M18 23.500h9" stroke="#2b579a" stroke-width="1.200"/><path d="M0 4 18 1v30L0 28z" fill="#2b579a"/><text x="9" y="21" text-anchor="middle" font-size="14" font-weight="bold" fill="#fff" font-family="Open Sans" textLength="11" lengthAdjust="spacingAndGlyphs">W</text></svg></div>
  <div class="ml-[2px] w-[60px] border border-[#27384d] rounded-[3px] bg-linear-to-br from-[#b9cfe8] to-[#83a7d0] flex items-center justify-center shadow-[inset_0_0_0_1px_#c3d5ea] relative"><svg class="w-[33px] h-[32px]" viewBox="0 0 33 32"><path d="M8 10q8-6 16-2 6 4 4 11-3 9-12 9-6 0-5-4 0-3-4-2-7 1-5-5 1-4 6-7z" fill="#c8e0f0" stroke="#7fb0d0"/><circle cx="6.500" cy="17" r="2.800" fill="#e04040"/><circle cx="11.500" cy="12" r="2.600" fill="#5cc040"/><circle cx="18" cy="10" r="2.800" fill="#f4b02a"/><circle cx="14.500" cy="20" r="2.300" fill="#5d94bd"/><path d="M26 9 17 31" stroke="#ee8a2a" stroke-width="2.500"/><path d="M24 10q0-5 2-8l6 2q-1 4-5 7z" fill="#c08a5c"/></svg></div>
  <div class="ml-auto relative flex items-center">
    <svg class="w-[112px] h-[20px] mr-[19px]" viewBox="1704 1050 112 20">
      <path d="M1705 1058h4l5-5v15l-5-5h-4z" fill="#d5512c" stroke="#5a2a20" stroke-width=".8"/><path d="M1716.500 1057q2 4 0 7M1719 1055q3.500 6 0 11" fill="none" stroke="#8f2b1a" stroke-width="1.300"/>
      <path d="M1731.500 1053h13v9q-2 4-6.500 6-5-2-6.500-6z" fill="#2583c4" stroke="#fff" stroke-width="1.500"/><text x="1738" y="1064" text-anchor="middle" font-size="10" font-weight="bold" fill="#fff" font-family="DejaVu Sans">S</text>
      <circle cx="1761.500" cy="1060.500" r="7.500" fill="#cfd2d5"/><path d="M1755 1066Q1758 1056 1768 1053" stroke="#213a9c" stroke-width="2" fill="none"/><circle cx="1762" cy="1061" r="1.800" fill="#fff"/>
      <rect x="1783" y="1056" width="10" height="8.500" fill="#35536f" stroke="#fff" stroke-width="1.500"/><path d="M1786 1068h8M1779 1054v4h5v-4M1781.500 1058v8h3" stroke="#fff" stroke-width="1.500" fill="none"/>
      <path d="M1807 1058h2.500l4.500-5v16l-4.500-5h-2.500z" fill="#fff"/>
    </svg>
    <div class="w-[60px] mr-[11px] text-white text-center text-[12px] leading-[17px] tracking-[-0.3px]">13:31<br>21/11/2016</div>
    <div class="w-[14px] h-full border border-[#2c3d54] bg-linear-to-b from-[#b9c9dc] to-[#56779f]"></div>
  </div>
</footer>

<script>
const text = (x, y, s, size, extra) => `<text x="${x}" y="${y}" font-size="${size}" font-family="DejaVu Sans, sans-serif" ${extra}>${s}</text>`;
const use = (id, x, y, s) => `<use href="#${id}" x="${x}" y="${y}" width="${s}" height="${s}"/>`;

const socket = `<path d="M-3.500 36.500q3-3 4-3V52.500q-1 0-4-3z" fill="#f4f4f4"/><path d="M.5 33l-4 3.500v12l4 4" fill="none" stroke="#8a8a8a"/><path d="M0 37h6q7 .5 7 6t-7 6H0z" fill="url(#plug)" stroke="#7e959b" stroke-width=".6"/>`;
const plugAt = x => `<g transform="translate(${x - .5} 0)"><path d="M2 33.500H-6Q-14.500 35-14.500 43T-6 52H2z" fill="#fafafa" stroke="#8a8a8a"/><path d="M0 37H-6q-7 .5-7 6t7 6H0z" fill="url(#plug)" stroke="#7e959b" stroke-width=".6"/></g>`;

// A programming block: header colour, artwork, mode glyph and parameter columns [glyph, value]
function block(b) {
  const n = b.params.length, W = b.w || 65 + 31 * n, pe = 51 + 31 * n;
  let top = '', cols = '';
  b.params.forEach(([ic, v], i) => {
    const l = 51 + 31 * i, c = l + 15;
    top += v === 'ok' ? ` H${c - 6} L${c} 51 L${c + 6} 57` : ` H${c - 5.500} V55 Q${c - 4.500} 51 ${c} 51 T${c + 5.500} 55 V57`;
    if (ic === 'x' || ic === 'y') cols += text(c, 41, ic, 16, 'text-anchor="middle" font-weight="bold" fill="#444" stroke="#444" stroke-width=".5"');
    else cols += use(ic, c - 12 + (ic.startsWith('p-sq') ? .5 : 0), ic === 'p-rot' ? 22 : 23, 24);
    if (i) cols += `<path d="M${l - .5} 58V81" stroke="#8e8e8e"/>`;
    cols += v === 'ok' ? use('p-check', c - 10.500, 58, 22) : text(c + .8, 72, v, 10, `text-anchor="middle" fill="#111" letter-spacing="${v.length > 1 ? .9 : 0}"`);
  });
  const g = b.orange ? 'orange' : 'green', d = b.orange ? 'dotso' : 'dots';
  let lab = '', right = W - 9;
  if (b.label) {
    const w = Math.max(36, b.lw + 13);
    lab = `<rect x="${W - 5 - w}" y="2" width="${w}" height="13" rx="2" fill="#fff"/>` + text(W - 4.500 - w / 2 - b.lw / 2, 12, b.label, 10, `textLength="${b.lw}" fill="#4a4a4a"`);
    right = W - 8 - w;
  }
  let left = 5;
  if (b.display) { left = 20; lab += `<rect x="3.500" y="2.500" width="14" height="12" rx="1" fill="#eee" stroke="#777"/><path d="M6.500 5h8v7h-8z" fill="#fff" stroke="#777" stroke-width=".8"/><circle cx="10.500" cy="8.500" r="1.800" fill="#888"/>`; }
  const hd = b.orange ? `M0 17V0H${W - 13}V17z` : `M0 17V3Q0 0 3 0H${W - 3}Q${W} 0 ${W} 3V17z`;
  return `<g transform="translate(${b.x} ${b.y})"><g filter="url(#sh)">
    <path d="M51 57h${31 * n}v24h-${31 * n}z" fill="url(#param)"/>
    <path d="M.5 16V85q0 3 3 3H48q3 0 3-3V57${top} H${pe}V83H${W - 3}q2.500 0 2.500-3V16z" fill="url(#body)" stroke="#858585"/></g>
    <path d="${hd}" fill="url(#${g})"/><path d="M0 16.500H${b.orange ? W - 15 : W}" stroke="${b.orange ? '#e8842a' : '#3c7d3a'}"/>
    <path d="M${left} 3H${right}V13H${left + 7}z" fill="url(#${d})"/>${lab}
    <rect x="4" y="59.500" width="43" height="26" rx="2.500" fill="url(#btn)" stroke="#8c8c8c"/>
    ${use(b.mode, b.mode === 'p-rot' ? 13.500 : 14.500, 60, 23)}
    ${use(b.art, 14, 22, 34)}${cols}${socket}${plugAt(W)}</g>`;
}
const X = 'ok';
const sound = (x, y, label, lw) => ({ x, y, label, lw, art: 'm-speaker', mode: 'p-folder', params: [['p-bars', '100'], ['p-flag', '0']] });
const display = (x, y, label, lw) => ({ x, y, label, lw, display: 1, art: 'm-display', mode: 'p-folder', params: [['p-eraser', X], ['x', '0'], ['y', '0']] });
const light = (x, y, sq, v) => ({ x, y, art: 'm-brick', mode: 'p-bulb', params: [[sq, v], ['p-wave', X]] });
const blocks = [
  display(196, 217, 'Pinch left', 52), light(359, 217, 'p-sqg', '0'), sound(491, 217, 'Motor start', 61),
  { x: 311, y: 483, label: 'D+A', lw: 25, art: 'm-steer', mode: 'p-rot', params: [['p-up', '0'], ['p-gauge', '100'], ['p-rot', '4'], ['p-skip', X]] },
  display(505, 483, 'Evil', 18), light(668, 483, 'p-sqr', '2'),
  { x: 800, y: 483, label: 'A', lw: 7, art: 'm-medium', mode: 'p-rot', params: [['p-gauge', '100'], ['p-rot', '1'], ['p-skip', X]] },
  { x: 963, y: 483, label: 'B+C', lw: 27, art: 'm-steer', mode: 'p-rot', params: [['p-down', '0'], ['p-gaugel', '-75'], ['p-rot', '2'], ['p-skip', X]] },
  sound(146, 681, 'Motor stop', 60), sound(278, 681, 'Air release', 60), display(410, 681, 'Tired middle', 71),
  light(573, 681, 'p-sqg', '0'), display(705, 681, 'Wink', 27), sound(868, 681, 'Game over', 62)
];
const wire = d => `<path d="${d}" transform="translate(1.500 1.500)" fill="none" stroke="#dedede" stroke-width="3"/><path d="${d}" fill="none" stroke="#a0a0a0" stroke-width="2"/>`;

const start = `<g filter="url(#sh)"><path d="M144 217H188q3 0 3 3V304.500H145Q124.500 290 124.500 256 124.500 230 144 217z" fill="#fbfbfb" stroke="#8a8a8a"/></g>
  <path d="M146 304Q127 288 127 258 127 244 131 233H191V304z" fill="url(#body)" stroke="#999"/>
  <path d="M130 233Q134 222 143 216.500H188q3 0 3 3V233z" fill="url(#orange)"/><path d="M142 220H187V228H150z" fill="url(#dotso)"/>
  <path d="M132 236.500H187.500V283.500H132Q124 259 132 236.500z" fill="#fff" stroke="#777"/>
  <path d="M146.500 242.500V271.500L170.500 257z" fill="#3fae62" stroke="#128a3d"/>
  <g transform="translate(191 217)">${plugAt(0)}</g>`;

const loop = `
  <path d="M255 560V586Q255 606.500 275 606.500H1225.500Q1245 606.500 1245 586V560" fill="none" stroke="#8c8c8c" stroke-width="3.600" filter="url(#sh)"/>
  <path d="M255 560V586Q255 606.500 275 606.500H1225.500Q1245 606.500 1245 586V560" fill="none" stroke="#eee" stroke-width="1.400"/>
  <g filter="url(#sh)"><path d="M726.500 433V417q0-2.500 2.500-2.500H773q2.500 0 2.500 2.500V433z" fill="#dcdcdc" stroke="#8a8a8a"/>
  <path d="M248.500 465V459Q248.500 432.500 275 432.500H1228Q1254.500 432.500 1254.500 460V498H1240V465Q1240 442 1219 442H281Q261 442 261 462V500H306V563q0 2.500-3 2.500H292V540H260.500V565q0 3-3 3H251.500q-3 0-3-3V484H251.500L240 465.500z" fill="url(#frame)" stroke="#8a8a8a"/></g>
  <path d="M257.500 499V466Q257.500 438 282 438H1219Q1244.500 438 1244.500 464V497q0 3-3 3H1239V466Q1239 442.500 1219 442.500H282Q262 442.500 261 465H274L262 483V500h-2q-2.500 0-2.500-2z" fill="#fbab39"/>
  <rect x="728.500" y="416.500" width="45" height="14" rx="2" fill="#fff" stroke="#8a8a8a"/>${text(751, 429, '01', 13, 'text-anchor="middle" fill="#111" textLength="15"')}
  <path d="M261 483H303q3 0 3 3V500H261z" fill="url(#orange)"/><path d="M264 487H297V495H269z" fill="url(#dotso)"/>
  <path d="M261 539.500H291.500V565.500H282Q282 571 277 571T272 565.500H261z" fill="#bcbfc2" stroke="#8a8a8a"/><path d="M262.500 541H290V545Q288 553 262.500 554z" fill="#e3e4e5"/>
  <g transform="translate(243.500 483)">${plugAt(0)}</g><g transform="translate(248 483)">${socket}</g><g transform="translate(306 483)">${plugAt(0)}</g>`;

document.getElementById('canvas').innerHTML =
  wire('M618 258H626q3 0 3 3V307q0 4-4 4H244.500q-3.500 0-3.500 4V518') +
  wire('M1256 525H1262q4 0 4 4V672q0 3.500-4 3.500H142.500q-3.500 0-3.500 4V712') +
  '<path d="M990 721.500H1005V726H990z" fill="#fff" stroke="#8c8c8c" filter="url(#sh)"/>' +
  start + loop +
  block({ x: 1157, y: 483, w: 98, orange: 1, art: 'm-loop', mode: 'p-hash', params: [['p-hash', '1']] }) +
  '<path d="M1239 465V500h2.500q3 0 3-3V465z" fill="#f59a33"/><path d="M1245 470V512H1254V470z" fill="#f4f4f4"/>' +
  '<g transform="translate(140.500 681)">' + plugAt(0) + '</g>' +
  blocks.map(block).join('');

// Palette category swatches and block buttons
let p = '<rect x="628.500" y="908.500" width="44" height="15" rx="2" fill="url(#t0)" stroke="#fff"/>';
['#fb9a40', '#e8d630', '#a01000', '#003a9b', '#0b9c9c'].forEach((c, i) => p += `<rect x="${679.5 + i * 50}" y="914.500" width="42" height="14" rx="2" fill="url(#t${i + 1})" stroke="${c}"/>`);
['m-medium', 'm-large', 'm-steer', 'm-tank', 'm-display', 'm-speaker', 'm-brick'].forEach((a, i) => {
  p += `<g transform="translate(${520 + i * 78} 948.5)"><g filter="url(#sh)"><path d="M.5 12V61q0 3 3 3H34q2.500 0 4-3h8.500q3 0 3-3V12z" fill="url(#body)" stroke="#868686"/><path d="M49 30.500h8" stroke="#888" stroke-width="3.500"/></g><path d="M49 30.500h7.500" stroke="#fff" stroke-width="1.500"/>
  <path d="M0 12.500V1.500Q0 0 2 0H48.500q1.500 0 1.500 1.500V12.500z" fill="url(#green)"/><path d="M4 3.500H46V10H9z" fill="url(#dots)"/>
  <rect x="3.500" y="43.500" width="31" height="18" rx="2" fill="url(#btn)" stroke="#999"/>${use(a, 10, 15, 25)}
  <path d="M0 25.500h-2v10h2z" fill="#eee" stroke="#8a8a8a"/><path d="M0 26.500h4q4.500 1 4.500 4t-4.500 4H0z" fill="#6f8a92"/>
  <path d="M51 24.500H45.500q-6 1.500-6 6t6 6h5.500z" fill="#fafafa" stroke="#8a8a8a"/><path d="M50 26.500H45.500q-4 1-4 4t4 4h4.500z" fill="#6f8a92"/></g>`;
});
document.getElementById('palette').innerHTML = p;
</script>
</body>
</html>
